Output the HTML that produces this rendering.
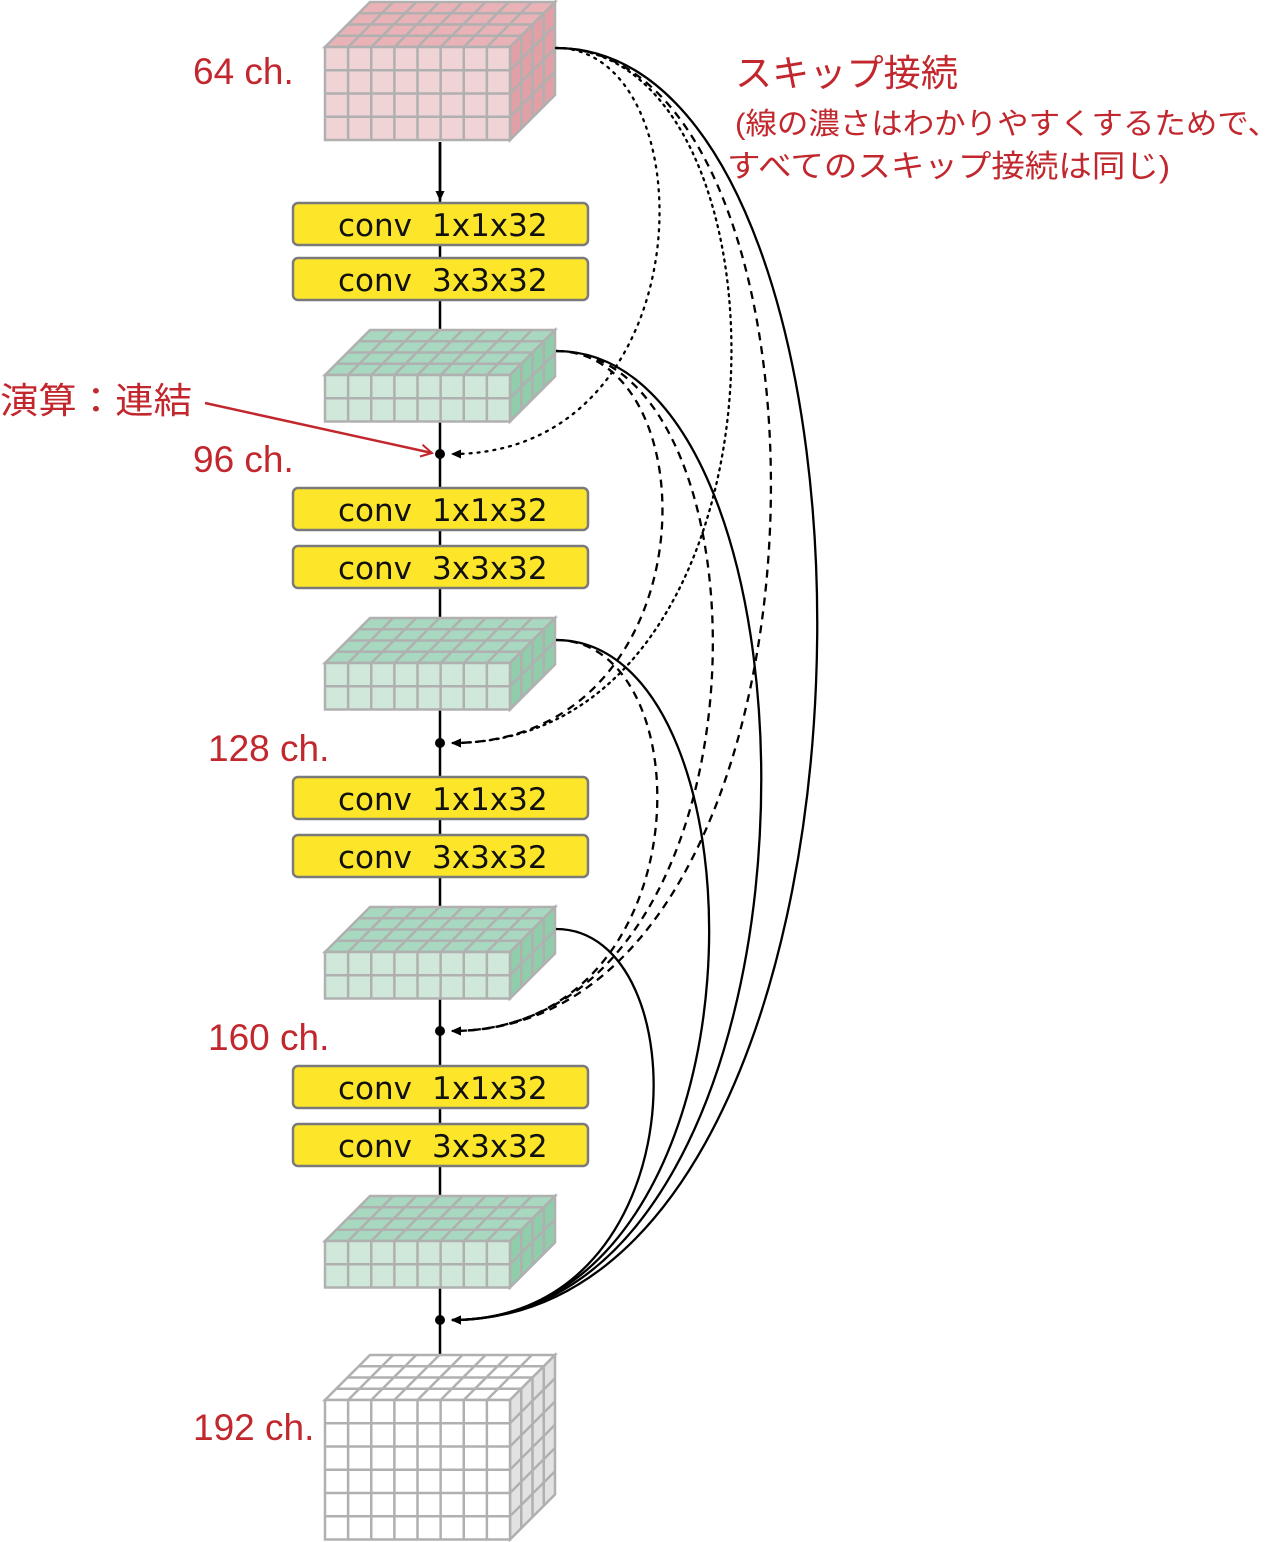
<!DOCTYPE html>
<html><head><meta charset="utf-8"><style>
html,body{margin:0;padding:0;background:#fff;}
svg{display:block}
.lbl{font-family:"Liberation Sans","Noto Sans CJK JP",sans-serif;fill:#c1272d;}
.cv{font-family:"DejaVu Sans","Liberation Sans",sans-serif;font-size:31px;fill:#111;}
</style></head><body>
<svg id="s" width="1279" height="1542" viewBox="0 0 1279 1542" xmlns="http://www.w3.org/2000/svg">
<defs>
<marker id="ah" markerWidth="12" markerHeight="12" refX="9" refY="6" orient="auto" markerUnits="userSpaceOnUse"><path d="M0,1.5 L10,6 L0,10.5 z" fill="#000"/></marker>
<marker id="rh" markerWidth="14" markerHeight="14" refX="12" refY="7" orient="auto" markerUnits="userSpaceOnUse"><path d="M1,1 L12,7 L1,13" fill="none" stroke="#c1272d" stroke-width="2"/></marker>
</defs>
<line x1="440" y1="142" x2="440" y2="1356" stroke="#000" stroke-width="2.5"/>
<line x1="440" y1="142" x2="440" y2="200" stroke="#000" stroke-width="2.5" marker-end="url(#ah)"/>
<g id="cubes"></g>
<g id="convs"></g>
<g fill="none" stroke="#000" stroke-width="2.3">
<path d="M556,48 C708,48 708,454 452,454" stroke-dasharray="2,6" stroke-linecap="round" marker-end="url(#ah)"/>
<path d="M556,48 C805,48 805,743 452,743" stroke-dasharray="2,5" stroke-linecap="round" marker-end="url(#ah)"/>
<path d="M556,48 C858,48 858,1031 452,1031" stroke-dasharray="8,6" marker-end="url(#ah)"/>
<path d="M556,48 C920,48 920,1320 452,1320" marker-end="url(#ah)"/>
<path d="M556,351 C712,351 712,743 452,743" stroke-dasharray="8,6" marker-end="url(#ah)"/>
<path d="M556,351 C780,351 780,1031 452,1031" stroke-dasharray="8,6" marker-end="url(#ah)"/>
<path d="M556,351 C845,351 845,1320 452,1320" marker-end="url(#ah)"/>
<path d="M556,640 C705,640 705,1031 452,1031" stroke-dasharray="8,6" marker-end="url(#ah)"/>
<path d="M556,640 C775,640 775,1320 452,1320" marker-end="url(#ah)"/>
<path d="M556,929 C700,929 700,1320 452,1320" marker-end="url(#ah)"/>
</g>
<g fill="#000"><circle cx="440" cy="454" r="5"/><circle cx="440" cy="743" r="5"/><circle cx="440" cy="1031" r="5"/><circle cx="440" cy="1320" r="5"/></g>
<line x1="205" y1="403" x2="432" y2="453" stroke="#c1272d" stroke-width="2.5" marker-end="url(#rh)"/>
<text class="lbl" x="193" y="84" font-size="37">64 ch.</text>
<text class="lbl" x="193" y="472" font-size="37">96 ch.</text>
<text class="lbl" x="208" y="761" font-size="37">128 ch.</text>
<text class="lbl" x="208" y="1050" font-size="37">160 ch.</text>
<text class="lbl" x="193" y="1440" font-size="37">192 ch.</text>
<text class="lbl" x="0" y="413" font-size="36" textLength="192" lengthAdjust="spacingAndGlyphs">演算：連結</text>
<text class="lbl" x="735" y="86" font-size="37" textLength="223" lengthAdjust="spacingAndGlyphs">スキップ接続</text>
<text class="lbl" x="735" y="134" font-size="30" textLength="544" lengthAdjust="spacingAndGlyphs">(線の濃さはわかりやすくするためで、</text>
<text class="lbl" x="727" y="177" font-size="31" textLength="443" lengthAdjust="spacingAndGlyphs">すべてのスキップ接続は同じ)</text>
</svg>
<script>
var NS="http://www.w3.org/2000/svg";
function el(p,t,a){var e=document.createElementNS(NS,t);for(var k in a)e.setAttribute(k,a[k]);p.appendChild(e);return e;}
var g=document.getElementById("cubes");
function cube(yf,rows,front,top,side){
 var x0=325,w=185,cw=w/8,ch=23.25,h=rows*ch,d=45,st=d/4,sc="#b0b0b0",sw=2.5;
 el(g,"polygon",{points:[x0,yf,x0+w,yf,x0+w+d,yf-d,x0+d,yf-d].join(" "),fill:top,stroke:sc,"stroke-width":sw});
 el(g,"polygon",{points:[x0+w,yf,x0+w+d,yf-d,x0+w+d,yf-d+h,x0+w,yf+h].join(" "),fill:side,stroke:sc,"stroke-width":sw});
 el(g,"rect",{x:x0,y:yf,width:w,height:h,fill:front,stroke:sc,"stroke-width":sw});
 for(var i=1;i<8;i++){el(g,"line",{x1:x0+i*cw,y1:yf,x2:x0+i*cw,y2:yf+h,stroke:sc,"stroke-width":sw});
  el(g,"line",{x1:x0+i*cw,y1:yf,x2:x0+i*cw+d,y2:yf-d,stroke:sc,"stroke-width":sw});}
 for(var j=1;j<rows;j++){el(g,"line",{x1:x0,y1:yf+j*ch,x2:x0+w,y2:yf+j*ch,stroke:sc,"stroke-width":sw});
  el(g,"line",{x1:x0+w,y1:yf+j*ch,x2:x0+w+d,y2:yf+j*ch-d,stroke:sc,"stroke-width":sw});}
 for(var k=1;k<4;k++){el(g,"line",{x1:x0+k*st,y1:yf-k*st,x2:x0+w+k*st,y2:yf-k*st,stroke:sc,"stroke-width":sw});
  el(g,"line",{x1:x0+w+k*st,y1:yf-k*st,x2:x0+w+k*st,y2:yf-k*st+h,stroke:sc,"stroke-width":sw});}
}
cube(47,4,"#f0d3d4","#e9b2b6","#e1a0a6");
var gr=["#cfe8da","#a8d8bf","#8fcdab"];
cube(375,2,gr[0],gr[1],gr[2]);cube(663,2,gr[0],gr[1],gr[2]);cube(952,2,gr[0],gr[1],gr[2]);cube(1241,2,gr[0],gr[1],gr[2]);
cube(1400,6,"#fff","#fff","#e2e2e2");
var c=document.getElementById("convs");
[[203,"1x1x32"],[258,"3x3x32"],[488,"1x1x32"],[546,"3x3x32"],[777,"1x1x32"],[835,"3x3x32"],[1066,"1x1x32"],[1124,"3x3x32"]].forEach(function(b){
 el(c,"rect",{x:293,y:b[0],width:295,height:42,rx:5,fill:"#fde52a",stroke:"#7a7a7a","stroke-width":2.5});
 var t=el(c,"text",{x:338,y:b[0]+33,"class":"cv"});t.textContent="conv";
 var t2=el(c,"text",{x:432,y:b[0]+33,"class":"cv"});t2.textContent=b[1];
});
</script>
</body></html>
